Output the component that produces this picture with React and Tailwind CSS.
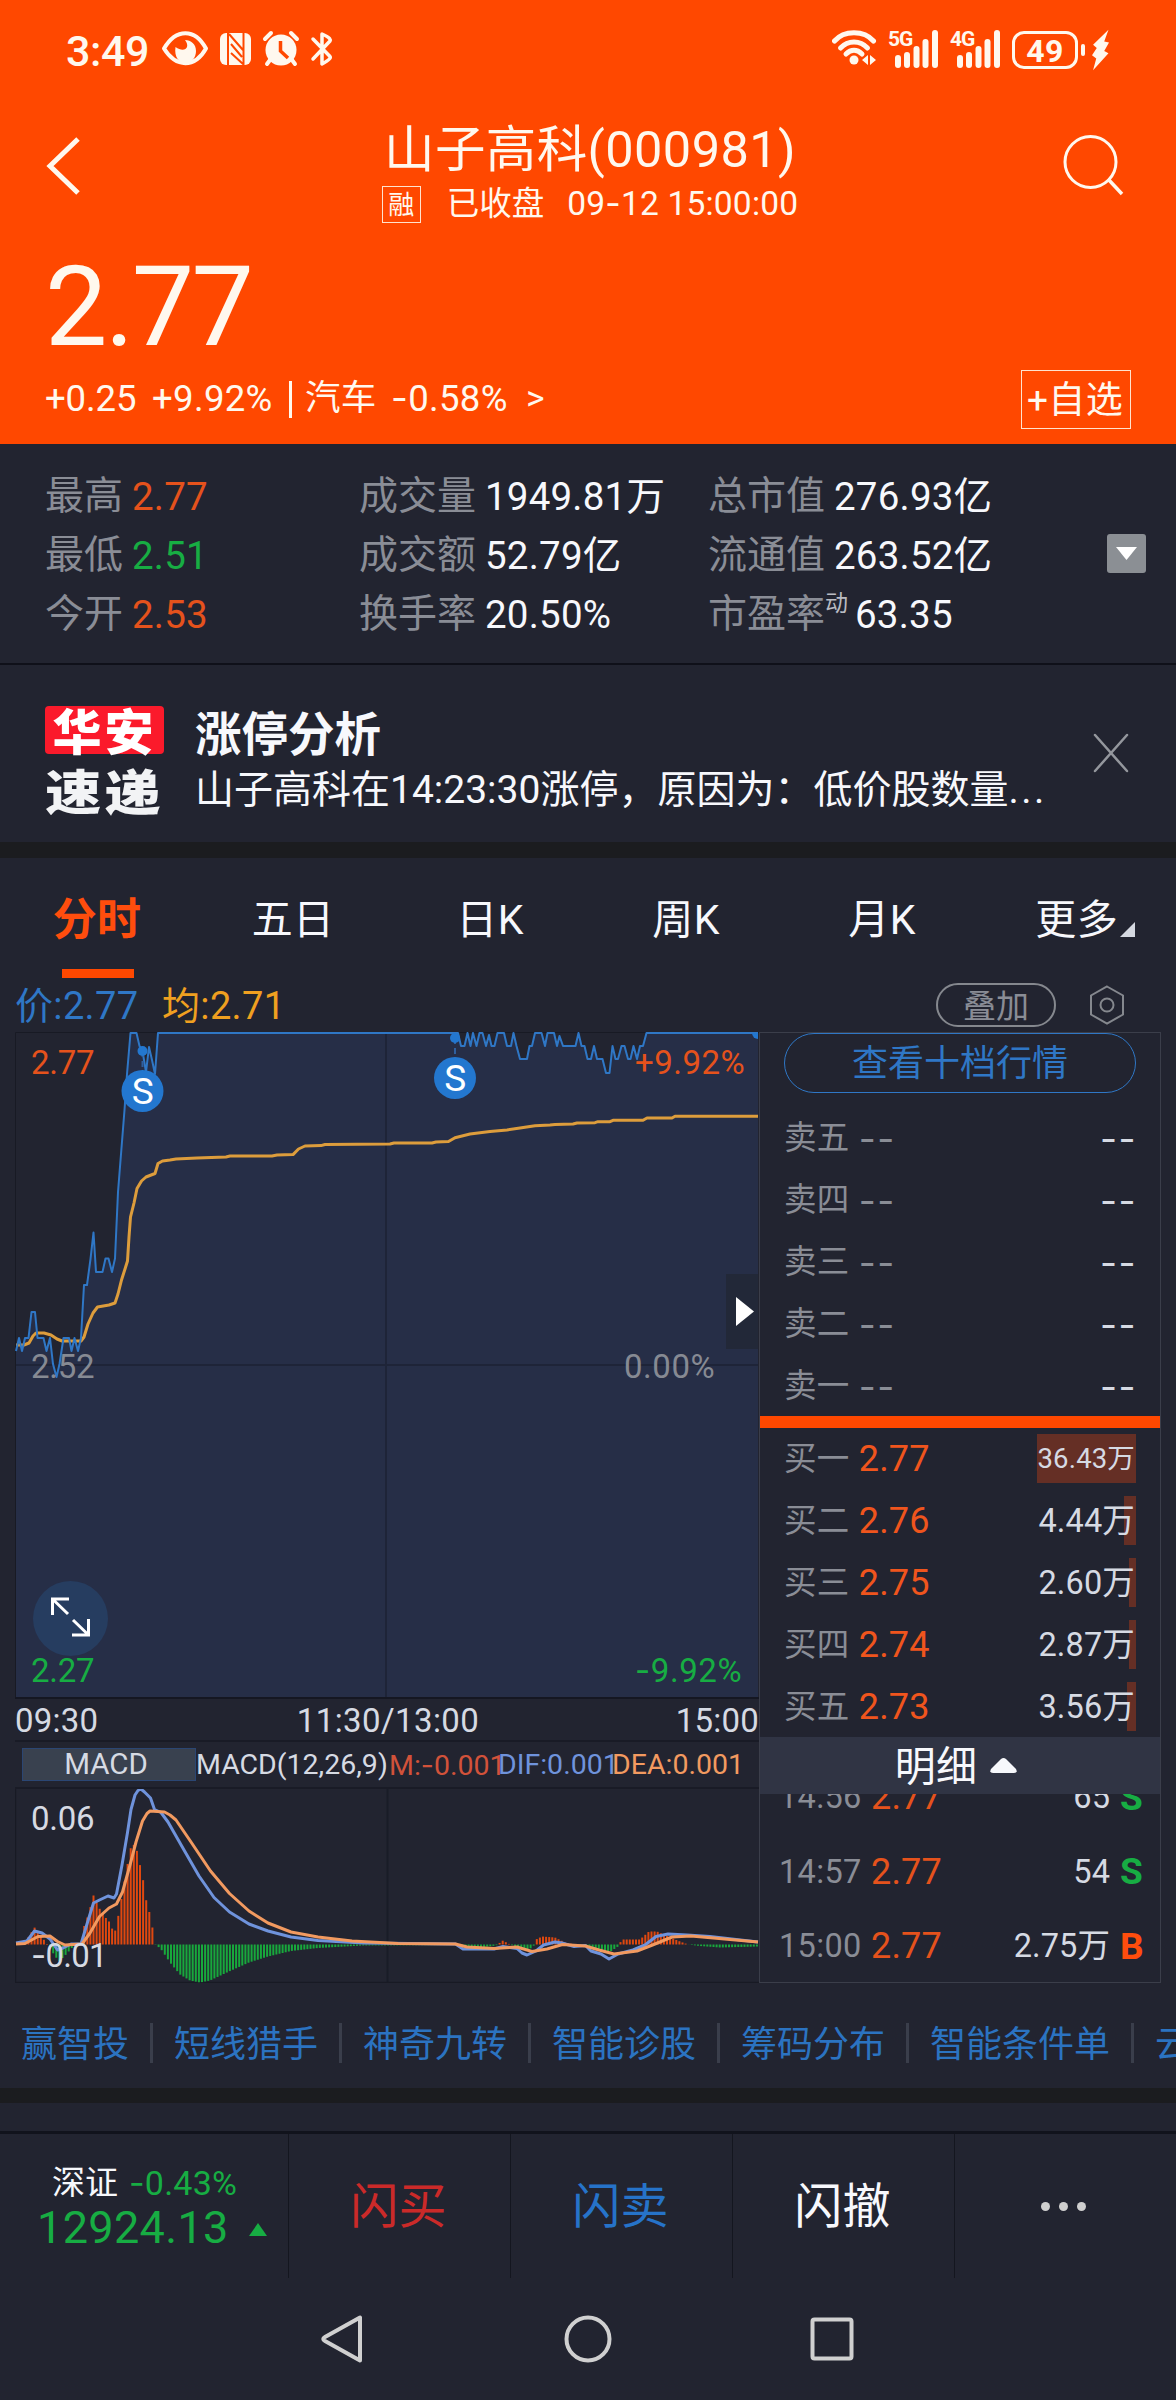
import React from "react";

const stats = [
  [
    { label: "最高", value: "2.77", color: "text-[#e5521c]" },
    { label: "最低", value: "2.51", color: "text-[#17ad43]" },
    { label: "今开", value: "2.53", color: "text-[#e5521c]" },
  ],
  [
    { label: "成交量", value: "1949.81万", color: "text-[#f7f8fc]" },
    { label: "成交额", value: "52.79亿", color: "text-[#f7f8fc]" },
    { label: "换手率", value: "20.50%", color: "text-[#f7f8fc]" },
  ],
  [
    { label: "总市值", value: "276.93亿", color: "text-[#f7f8fc]" },
    { label: "流通值", value: "263.52亿", color: "text-[#f7f8fc]" },
    { label: "市盈率", sup: "动", value: "63.35", color: "text-[#f7f8fc]" },
  ],
];

const sells = ["卖五", "卖四", "卖三", "卖二", "卖一"];

const buys = [
  { label: "买一", price: "2.77", vol: "36.43万", bar: 99, small: true },
  { label: "买二", price: "2.76", vol: "4.44万", bar: 12 },
  { label: "买三", price: "2.75", vol: "2.60万", bar: 7 },
  { label: "买四", price: "2.74", vol: "2.87万", bar: 7 },
  { label: "买五", price: "2.73", vol: "3.56万", bar: 9 },
];

const trades = [
  { time: "14:56", price: "2.77", vol: "65", side: "S" },
  { time: "14:57", price: "2.77", vol: "54", side: "S" },
  { time: "15:00", price: "2.77", vol: "2.75万", side: "B" },
];

const links = ["赢智投", "短线猎手", "神奇九转", "智能诊股", "筹码分布", "智能条件单", "云参数"];

const pricePoints =
  "16,1351 19,1338 22,1351 25,1338 28.5,1338 31.5,1312 35,1312 37.5,1338 43.5,1338 46.5,1351 50,1338 53,1364 56.5,1377 59.5,1364 63.5,1338 69,1338 71.5,1351 74.5,1338 78,1351 81,1338 84,1285 87,1285 90.5,1259 93.5,1232.5 96,1272 102.5,1272 105.5,1258.5 108.5,1258.5 112,1272 115,1258.5 118,1192 124.5,1110 127,1074 130.5,1033 136.5,1033 139.5,1046 142.5,1051 146,1072 149,1047 152,1060 155,1074 158,1033 458,1033 461,1046 464.5,1046 467.5,1033 470.5,1046 473,1033 476.5,1046 479.5,1033 482.5,1033 486,1046 489,1035 491.5,1046 494.5,1046 497.5,1033 504,1033 507,1046 511,1046 513.5,1033 516.5,1046 520,1059 527,1059 529.5,1046 532,1046 535,1033 541.5,1033 545,1046 547.5,1033 554,1033 557,1046 559.5,1036 563,1046 575.5,1046 578.5,1033 581.5,1046 584.5,1046 587.5,1059 591,1059 594,1046 597,1059 602.5,1059 606,1073 609.5,1073 612.5,1046 615.5,1059 618,1059 621.5,1046 624.5,1046 628,1059 630.5,1059 633.5,1046 637,1059 640,1046 643,1046 646.5,1033 758,1033";

const avgPoints =
  "16,1345 24,1345 29,1343 33,1336 36,1333 44,1333 51,1335 57,1339 62,1341 81,1341 84,1337 88,1324 93,1313 97.5,1307 109,1305 115,1303 118,1294 121.5,1280 125,1269 127.5,1261 129,1237 130.5,1217 134,1203 137,1188.5 141.5,1181 146,1177 155,1173.5 158,1163.5 162.5,1161 170,1160 176,1159 197,1158 226,1157 230,1156 272,1156 277,1155 293,1154.6 298.5,1149 305,1146 321,1145.6 325,1144.5 390,1144 394,1143 432,1143 436,1142 448.5,1141.5 455,1137.7 470,1134 490,1131.5 507,1130 520,1128 535,1125.7 550,1125 555,1124.5 573,1124 577,1123 595,1122.7 598,1121.7 610,1121.7 613,1120.3 643,1120.3 647,1118 672,1118 675,1116.3 758,1116.3";

const difPoints =
  "16,1943 27,1941 34.5,1931 42,1933 50,1939 57.5,1950 63,1948 71,1944 81,1944 87,1924 93.5,1903 99.5,1900 108,1896 114,1898 116.5,1894 122,1865 127.5,1832.5 131,1809.5 135,1795 138,1790.5 141,1789 144.5,1792 150.5,1798 154.5,1809.5 161,1812.5 168,1822 184,1850 199,1876 214,1897.5 229.5,1912 249,1924 268,1931 291,1937 318,1940.5 363.5,1943 455.5,1944 463,1949 476,1949 494,1949 503,1946.5 517,1948.5 522,1953 527,1955 536,1951 543.5,1945 555,1942 562,1943 574,1946.5 585.5,1945.5 591,1951 601,1954 609,1959 618,1954 633,1950 645,1945 656,1936.5 668,1934 687,1935 710,1936.5 758,1942";

const deaPoints =
  "16,1944 25,1943.5 38,1936.5 50,1936 57.5,1941.5 65,1945 82,1944 90,1933 99.5,1916.5 109,1908 116.5,1904 122.5,1892 130,1865 136,1842 142.5,1821 147,1813.5 150,1811 164.5,1812 170,1815 176,1820 191,1842 210.5,1871 229.5,1893.5 249,1911 268,1923 291,1932 318,1937 352,1941 398,1943.5 455.5,1944 467,1947 494,1948.5 517,1947 532,1951.5 547,1949 562.5,1944.5 585.5,1946 599,1950 614,1954 637,1951 652.5,1945 672,1937 691,1936 758,1942";

// [x, height] pairs, values between them are interpolated
const macdKnots = [
  [16, 0], [25, 2], [34.5, 17], [46, 2], [48, -1], [54, -10], [59, -17], [66, -10], [74, -1], [81, 0],
  [84, 18], [87, 26], [90.3, 37], [93.5, 49], [99.5, 36], [105.5, 27], [109, 23], [112, 16], [115, 13],
  [118, 27], [121.3, 45], [127.5, 80], [130.5, 96], [133.5, 100], [136.6, 95], [142.7, 67], [146, 45],
  [149, 34], [153, 14], [155, 0], [158, -2], [162, -6], [170, -18], [180, -30], [190, -36], [200, -38],
  [210, -36], [229, -27], [249, -18], [268, -12], [291, -6.5], [318, -3.5], [363, -1], [455, -0.5],
  [463, -4], [480, -3], [496, -1], [503, 4], [508, 1], [515, -2], [527, -5], [533, -3], [536, 5],
  [542, 8], [555, 7], [565, 2], [575, 0], [590, -3], [601, -5], [609, -8], [618, -2], [622, 5],
  [640, 5], [649, 13], [657, 13], [668, 8], [680, 3], [688, 0], [700, -1.5], [720, -3], [758, -2],
];

const macdBars = Array.from({ length: 240 }, (_, i) => {
  const x = 16 + i * 3.1;
  const k = macdKnots.findIndex((p) => p[0] >= x);
  if (k <= 0) return { x, h: 0 };
  const [x0, h0] = macdKnots[k - 1];
  const [x1, h1] = macdKnots[k];
  return { x, h: h0 + ((h1 - h0) * (x - x0)) / (x1 - x0) };
});

// Roboto's hyphen is too short for a minus sign
const Minus = () => <span className="font-['Inter']">-</span>;

const SignalBars = ({ type }) => (
  <div className="relative h-[42px] w-[50px]">
    <span className="absolute left-0 top-0 text-[21px] leading-none font-bold tracking-[-1px]">{type}</span>
    <svg className="absolute inset-0" width="50" height="42" viewBox="0 0 50 42" fill="#fff8ee">
      <rect x="7" y="26" width="6" height="13" rx="3" />
      <rect x="16" y="23" width="6" height="16" rx="3" />
      <rect x="25.5" y="17" width="6" height="22" rx="3" />
      <rect x="34.5" y="10" width="6" height="29" rx="3" />
      <rect x="44" y="1" width="6" height="38" rx="3" />
    </svg>
  </div>
);

const StatusBar = () => (
  <div className="flex h-[100px] items-center text-[#fff8ee]">
    <div className="ml-[66px] w-[95px] pt-[2px] text-[43px] leading-none font-medium tracking-[-0.4px]">3:49</div>
    <svg width="180" height="44" viewBox="160 29 180 44" fill="none" stroke="#fff8ee" strokeWidth="4">
      <path d="M163 49.5C175 29 194 29 205 49.5C194 69 175 69 163 49.5Z" strokeWidth="4" strokeLinejoin="round" />
      <path d="M184 41C190 49 183 54 174.5 48C173 58 178 64 184.5 64C191 64 195 58 195 52C195 45 190 41 184 41Z" fill="#fff8ee" stroke="none" />
      <rect x="219" y="34" width="31" height="32" rx="6" fill="#fff8ee" stroke="none" />
      <path d="M227 34V66M228 35L242 51M242.5 34V66M230 45L241 58M230 54L242 65" stroke="#ff4800" strokeWidth="2" />
      <circle cx="280" cy="51" r="15.5" fill="#fff8ee" stroke="none" />
      <path d="M279.5 42V52L287 59" stroke="#ff4800" strokeWidth="3.5" />
      <path d="M264 40L270 34M296 40L290 34" strokeLinecap="round" />
      <path d="M269 61L266 65M291 61L294 65" strokeLinecap="round" />
      <path d="M312 40L329 57.5C331 60 321 65 321 65V35C321 35 331 39 329 42L312 60" strokeLinejoin="round" strokeLinecap="round" strokeWidth="3.5" />
    </svg>
    <div className="ml-[491px] flex items-center">
      <svg width="45" height="42" viewBox="831 31 45 42" fill="none" stroke="#fff8ee" strokeWidth="5" strokeLinecap="round">
        <path d="M833.5 43C843 32 863 32 872.5 43" />
        <path d="M839.5 50C847 42 859 42 866.5 50" />
        <path d="M845 56C850 51 856 51 861 56" />
        <circle cx="853" cy="62" r="4.5" fill="#fff8ee" stroke="none" />
        <path d="M867 57V67L861 62ZM869 57V67L875 62Z" fill="#fff8ee" stroke="none" />
      </svg>
      <div className="ml-[11px]">
        <SignalBars type="5G" />
      </div>
      <div className="ml-[12px]">
        <SignalBars type="4G" />
      </div>
      <div className="ml-[12px] flex h-[38px] w-[66px] items-center justify-center rounded-[12px] border-[3px] border-[#fff8ee] pt-[2px] text-[32px] leading-none font-bold">
        49
      </div>
      <div className="ml-[3px] h-[12px] w-[4px] rounded bg-[#fff8ee]" />
      <svg className="ml-[7px]" width="17" height="42" viewBox="0 0 16 38" fill="#fff8ee">
        <path d="M15.5 0L1 14L4.500 17L0 24L4 27L1 38L15.500 22L11.500 20L16 12L11.500 11Z" />
      </svg>
    </div>
  </div>
);

const Header = () => (
  <div className="h-[444px] bg-[#ff4800] text-[#fff8ee]">
    <StatusBar />
    <div className="flex h-[144px] items-start justify-between pl-[46px] pr-[52px]">
      <svg className="mt-[37px] w-[72px]" width="36" height="58" viewBox="0 0 72 58" fill="none" stroke="#fff8ee" strokeWidth="5">
        <path d="M32 2L4 29L32 56" />
      </svg>
      <div className="flex flex-col items-center">
        <div className="mt-[24px] text-[50.5px] leading-[52px] tracking-[0.4px]">山子高科(000981)</div>
        <div className="mt-[9px] flex h-[38px] items-center text-[32.5px] leading-none">
          <span className="flex h-[37px] w-[39px] items-center justify-center border border-[#ffe3cf] pt-[2px] text-[26px] tracking-normal">融</span>
          <span className="ml-[26px] tracking-normal">已收盘</span>
          <span className="ml-[23px] text-[33.5px] tracking-[0.2px]">
            09<Minus />12 15:00:00
          </span>
        </div>
      </div>
      <svg className="mt-[35px]" width="62" height="62" viewBox="0 0 62 62" fill="none" stroke="#fff8ee" strokeWidth="3">
        <circle cx="28.5" cy="27" r="25.5" />
        <path d="M46 44L60 59" strokeWidth="3.5" />
      </svg>
    </div>
    <div className="h-[112px] pt-[7px] pl-[45px] text-[111px] leading-[112px] tracking-[-2.5px]">2.77</div>
    <div className="flex h-[86px] items-center pl-[45px] pr-[45px] text-[35.5px] leading-none">
      <span className="w-[107px] text-[36.5px] tracking-[-0.1px]">+0.25</span>
      <span className="w-[137px] text-[36.5px]">+9.92%</span>
      <span className="h-[37px] w-[3px] bg-[#fff8ee]" />
      <span className="ml-[13px] w-[86px]">汽车</span>
      <span className="w-[135px] text-[36.5px]">
        <Minus />0.58%
      </span>
      <span>&gt;</span>
      <span className="ml-auto flex h-[59px] w-[110px] items-center justify-center border border-[#ffe3cf] pt-[2px] pr-[2px] text-[37px]">+自选</span>
    </div>
  </div>
);

const Stats = () => (
  <div className="relative flex h-[219px] pl-[45px] pt-[23px] text-[39px] leading-[59px] tracking-normal">
    {stats.map((col, i) => (
      <div key={i} className={i === 0 ? "w-[314px]" : "w-[349px]"}>
        {col.map((s) => (
          <div key={s.label} className="flex whitespace-nowrap">
            <span className="text-[#8a8d96]">{s.label}</span>
            {s.sup && <span className="-mt-[11px] text-[23px] text-[#b9bbc2]">{s.sup}</span>}
            <span className={`${s.sup ? "ml-[7px]" : "ml-[9px]"} text-[38.5px] tracking-[0.2px] ${s.color}`}>{s.value}</span>
          </div>
        ))}
      </div>
    ))}
    <div className="absolute left-[1107px] top-[90px] flex h-[39px] w-[39px] items-center justify-center rounded-[3px] bg-[#8b8f94]">
      <svg width="21" height="13" viewBox="0 0 21 13" fill="#fff">
        <path d="M0 0H21L10.5 13Z" />
      </svg>
    </div>
  </div>
);

const News = () => (
  <div className="flex h-[179px] border-t-2 border-[#0f1019] pl-[45px]">
    <div className="mt-[41px] w-[119px] text-center font-['Noto_Sans_CJK_SC'] font-black tracking-[3px]">
      <div className="h-[48px] rounded-[4px] bg-[#fb1a2b] text-[49px] leading-[45px] text-white">华安</div>
      <div className="mt-[14px] h-[48px] scale-x-112 scale-y-95 text-[50px] leading-[42px] text-[#f2f3f5]">速递</div>
    </div>
    <div className="ml-[31px] w-[860px]">
      <div className="mt-[45px] text-[46.5px] leading-[50px] font-bold tracking-normal text-[#f7f8fc]">涨停分析</div>
      <div className="mt-[6px] text-[39px] leading-[48px] tracking-normal whitespace-nowrap text-[#f7f8fc]">
        山子高科在14:23:30涨停，原因为：低价股数量<span className="tracking-[2.5px]">...</span>
      </div>
    </div>
    <svg className="mt-[68px] ml-[38px]" width="36" height="40" viewBox="0 0 36 40" stroke="#94979d" strokeWidth="2.5" strokeLinecap="round">
      <path d="M2 2L34 38M34 2L2 38" />
    </svg>
  </div>
);

const Tabs = () => (
  <div className="grid h-[120px] grid-cols-6 pt-[2px] text-center text-[41px] leading-[120px] text-[#f7f8fc]">
    <div className="relative pr-[2px] text-[44px] font-bold text-[#ff4d0d]">
      分时
      <span className="absolute left-[62px] top-[109px] h-[9px] w-[72px] bg-[#ff4800]" />
    </div>
    <div className="pr-[2px]">五日</div>
    <div>日K</div>
    <div>周K</div>
    <div>月K</div>
    <div className="flex h-[120px] items-center justify-end pr-[41px]">
      更多
      <svg className="mt-[18px] ml-[2px]" width="15" height="15" viewBox="0 0 15 15" fill="#d5d8e0">
        <path d="M15 0V15H0Z" />
      </svg>
    </div>
  </div>
);

const ChartHeader = () => (
  <div className="flex h-[54px] items-center pl-[15px] text-[38px] leading-none">
    <span className="w-[147px] pt-[2px] text-[#2f77c6]">价:2.77</span>
    <span className="pt-[2px] text-[#f0a020]">均:2.71</span>
    <span className="ml-auto flex h-[44px] w-[120px] items-center justify-center rounded-full border-2 border-[#85888e] pt-[2px] text-[33px] tracking-normal text-[#8a8d96]">
      叠加
    </span>
    <svg className="mr-[52px] ml-[34px]" width="34" height="40" viewBox="0 0 34 40" fill="none" stroke="#85888e" strokeWidth="2">
      <path d="M17 1.5L33 10.5V29.5L17 38.5L1 29.5V10.5Z" />
      <circle cx="17" cy="20" r="6.5" />
    </svg>
  </div>
);

const Marker = ({ x, y, dotY }) => (
  <g>
    <path d={`M${x} ${dotY}V${y}`} stroke="#2f5f9e" strokeWidth="2" strokeDasharray="6 4" />
    <circle cx={x} cy={dotY} r="5" fill="#2377cf" />
    <circle cx={x} cy={y} r="21" fill="#2377cf" />
    <text x={x + 0.5} y={y + 13} textAnchor="middle" fontSize="37" fill="#fff">
      S
    </text>
  </g>
);

const PriceChart = () => (
  <svg className="block" width="744" height="667" viewBox="15 1032 744 667">
    <polygon points={`16,1698 ${pricePoints} 758,1698`} fill="#262e47" />
    <path d="M16 1365H758M386 1033V1698" stroke="#1e2438" strokeWidth="2" />
    <path d="M15.5 1698V1032.5H759" fill="none" stroke="#181a24" />
    <path d="M15 1698H759" stroke="#151722" strokeWidth="2" />
    <polyline points={avgPoints} fill="none" stroke="#dd9d3c" strokeWidth="3" strokeLinejoin="round" />
    <polyline points={pricePoints} fill="none" stroke="#2f77c6" strokeWidth="2" strokeLinejoin="round" />
    <path d="M752 1033A6 6 0 0 0 758 1039V1033Z" fill="#2377cf" />
    <Marker x={142.5} y={1091} dotY={1051} />
    <Marker x={455} y={1078} dotY={1038} />
    <g fontSize="33">
      <text x="31" y="1074" textLength="64" fill="#e5521c">2.77</text>
      <text x="635" y="1074" textLength="110" fill="#e5521c">+9.92%</text>
      <text x="31" y="1378" textLength="64" fill="#868a93">2.52</text>
      <text x="624" y="1378" textLength="91" fill="#868a93">0.00%</text>
      <text x="31" y="1682" textLength="64" fill="#17ad43">2.27</text>
      <text x="635" y="1682" textLength="107" fill="#17ad43">
        <tspan className="font-['Inter']">-</tspan>9.92%
      </text>
    </g>
    <rect x="726" y="1274" width="32" height="75" fill="#222838" />
    <path d="M736 1297L754 1311.5L736 1326Z" fill="#fff" />
    <circle cx="70.5" cy="1618.5" r="37.5" fill="#263d60" />
    <path
      d="M52.5 1615V1599H69M53 1599.5L68 1614M88.5 1619V1635H72M88 1634.5L73 1620"
      fill="none"
      stroke="#fff"
      strokeWidth="3"
    />
  </svg>
);

const MacdChart = () => (
  <svg className="block" width="744" height="194" viewBox="15 1789 744 194">
    <path d="M387.5 1789V1982" stroke="#191c27" strokeWidth="2" />
    <path d="M15.5 1789V1982.5H759" fill="none" stroke="#181a24" strokeWidth="1.5" />
    {macdBars.map((b) => (
      <rect
        key={b.x}
        x={b.x - 1}
        y={b.h > 0 ? 1944.5 - b.h : 1944.5}
        width="2"
        height={Math.abs(b.h)}
        fill={b.h > 0 ? "#e0480f" : "#18a83c"}
      />
    ))}
    <polyline points={difPoints} fill="none" stroke="#6f93dc" strokeWidth="3" strokeLinejoin="round" />
    <polyline points={deaPoints} fill="none" stroke="#f29a60" strokeWidth="3" strokeLinejoin="round" />
    <g fontSize="33" fill="#d6dae3">
      <text x="31" y="1830" textLength="64">0.06</text>
      <text x="31" y="1966.5" textLength="77">
        <tspan className="font-['Inter']">-</tspan>0.01
      </text>
    </g>
  </svg>
);

const ChartPanel = () => (
  <div className="w-[744px]">
    <PriceChart />
    <div className="flex h-[41px] items-center justify-between pt-[2px] text-[33px] leading-none tracking-[0.2px] text-[#d6dae3]">
      <span className="w-[180px]">09:30</span>
      <span className="pl-[2px] tracking-[0.4px]">11:30/13:00</span>
      <span className="w-[180px] text-right">15:00</span>
    </div>
    <div className="flex h-[49px] items-center border-y-2 border-[#191b26] pl-[7px] text-[28.5px] leading-none tracking-normal whitespace-nowrap text-[#d6dae3]">
      <span className="flex h-[33px] w-[174px] items-center justify-center border border-[#2b4673] bg-[#39414f] pr-[6px] text-[29.5px]">MACD</span>
      <span className="w-[193px] pt-[2px]">MACD(12,26,9)</span>
      <span className="w-[109px] pt-[2px] text-[#d2523a]">
        M:<Minus />0.001
      </span>
      <span className="w-[114px] pt-[2px] text-[#6f93dc]">DIF:0.001</span>
      <span className="pt-[2px] text-[#f29a60]">DEA:0.001</span>
    </div>
    <MacdChart />
  </div>
);

const OrderBook = () => (
  <div className="h-[951px] w-[402px] overflow-hidden border border-[#3b3e4a] text-[32.5px] leading-none">
    <div className="mx-[24px] flex h-[60px] items-center justify-center rounded-full border border-[#2f77c6] pt-px text-[36px] tracking-normal text-[#2f77c6]">
      查看十档行情
    </div>
    <div className="mt-[14px]">
      {sells.map((s) => (
        <div key={s} className="flex h-[62px] items-center pt-px pl-[24px] pr-[23px] text-[#8a8d96]">
          <span>{s}</span>
          <span className="ml-[9px] font-['Inter'] text-[37px] tracking-[1.5px]">--</span>
          <span className="ml-auto font-['Inter'] text-[37px] tracking-[1.5px] text-[#d6dae3]">--</span>
        </div>
      ))}
    </div>
    <div className="-mt-px h-[12px] bg-[#ff4800]" />
    {buys.map((b) => (
      <div key={b.label} className="relative flex h-[62px] items-center pl-[24px] pr-[25px]">
        <span
          className="absolute top-[6px] right-[24px] h-[49px] bg-[#652f25]"
          style={{ width: b.bar }}
        />
        <span className="text-[#8a8d96]">{b.label}</span>
        <span className="ml-[9px] text-[36px] tracking-[0.2px] text-[#f0551d]">{b.price}</span>
        <span className={`relative ml-auto tracking-[0.15px] text-[#d6dae3] ${b.small ? "text-[27.5px]" : "text-[32.5px]"}`}>{b.vol}</span>
      </div>
    ))}
    <div className="relative -mt-px flex h-[57px] items-center justify-center bg-[#303444] pr-[8px] pt-[3px] text-[41px] text-[#f7f8fc]">
      明细
      <svg className="mb-[3px] ml-[13px]" width="27" height="15" viewBox="0 0 27 15" fill="#f7f8fc">
        <path d="M11 1Q13.5 -1 16 1L26 11Q28 15 24 15H3Q-1 15 1 11Z" />
      </svg>
    </div>
    <div className="-mt-[34px]">
      {trades.map((t) => (
        <div key={t.time} className="flex h-[74.5px] items-center pl-[19px] pr-[17px]">
          <span className="w-[92px] text-[32.5px] text-[#8a8d96]">{t.time}</span>
          <span className="text-[36px] tracking-[0.2px] text-[#e5521c]">{t.price}</span>
          <span className="ml-auto text-[32.5px] tracking-[0.1px] text-[#d6dae3]">{t.vol}</span>
          <span className={`ml-[10px] w-[23px] text-center text-[37px] font-bold ${t.side === "S" ? "text-[#17ad43]" : "text-[#ff4d0d]"}`}>
            {t.side}
          </span>
        </div>
      ))}
    </div>
  </div>
);

const Links = () => (
  <div className="flex h-[105px] items-center overflow-hidden pl-[21px] pt-[14px] text-[36px] leading-none tracking-normal whitespace-nowrap text-[#2b73c1]">
    {links.map((l) => (
      <div key={l} className="flex items-center">
        <span className="pt-[4px]">{l}</span>
        <span className="mx-[21px] h-[40px] w-[3px] bg-[#3a3e4b]" />
      </div>
    ))}
  </div>
);

const BottomBar = () => (
  <div className="flex h-[147px] border-t-[3px] border-[#11131c] text-center text-[48px] leading-[146px]">
    <div className="w-[288px] text-[#17ad43]">
      <div className="mt-[33px] flex items-center pl-[52px] text-[33px] leading-[32px] tracking-normal">
        <span className="text-[#f7f8fc]">深证</span>
        <span className="ml-[11px] text-[34px] tracking-[0.2px]">
          <Minus />0.43%
        </span>
      </div>
      <div className="mt-[4px] flex items-center pl-[37px] text-[45px] leading-[50px]">
        12924.13
        <svg className="mt-[3px] ml-[20px]" width="18" height="13" viewBox="0 0 18 13" fill="#17ad43">
          <path d="M9 0L18 13H0Z" />
        </svg>
      </div>
    </div>
    <div className="w-[222px] border-l border-[#14161f] pr-[2px] text-[#cb2a29]">闪买</div>
    <div className="w-[222px] border-l border-[#14161f] pr-[2px] text-[#2673c9]">闪卖</div>
    <div className="w-[222px] border-l border-[#14161f] pr-[2px] text-[#f7f8fc]">闪撤</div>
    <div className="flex w-[222px] items-center justify-center gap-[9px] border-l border-[#14161f] pr-[5px]">
      <span className="h-[9px] w-[9px] rounded-full bg-[#cfcfcf]" />
      <span className="h-[9px] w-[9px] rounded-full bg-[#cfcfcf]" />
      <span className="h-[9px] w-[9px] rounded-full bg-[#cfcfcf]" />
    </div>
  </div>
);

const NavBar = () => (
  <div className="flex h-[122px] items-center justify-center">
    <svg width="536" height="50" viewBox="320 2314 536 50" fill="none" stroke="#d0d0d0" strokeWidth="4" strokeLinejoin="round">
      <path d="M360 2317.5V2360.5L325 2341Q321.5 2339 325 2337Z" />
      <circle cx="588" cy="2339" r="21.5" />
      <rect x="812.5" y="2319.5" width="39" height="39" rx="2" />
    </svg>
  </div>
);

const App = () => {
  return (
    <div className="flex h-[2400px] w-[1176px] flex-col overflow-hidden bg-[#222430] font-['Roboto','Noto_Sans_CJK_SC',sans-serif] tracking-[0.35px]">
      <Header />
      <Stats />
      <News />
      <div className="h-[16px] bg-[#1b1c1f]" />
      <Tabs />
      <ChartHeader />
      <div className="flex h-[951px] pl-[15px]">
        <ChartPanel />
        <OrderBook />
      </div>
      <Links />
      <div className="h-[15px] bg-[#1b1c1f]" />
      <div className="h-[28px]" />
      <BottomBar />
      <NavBar />
    </div>
  );
};

export default App;
